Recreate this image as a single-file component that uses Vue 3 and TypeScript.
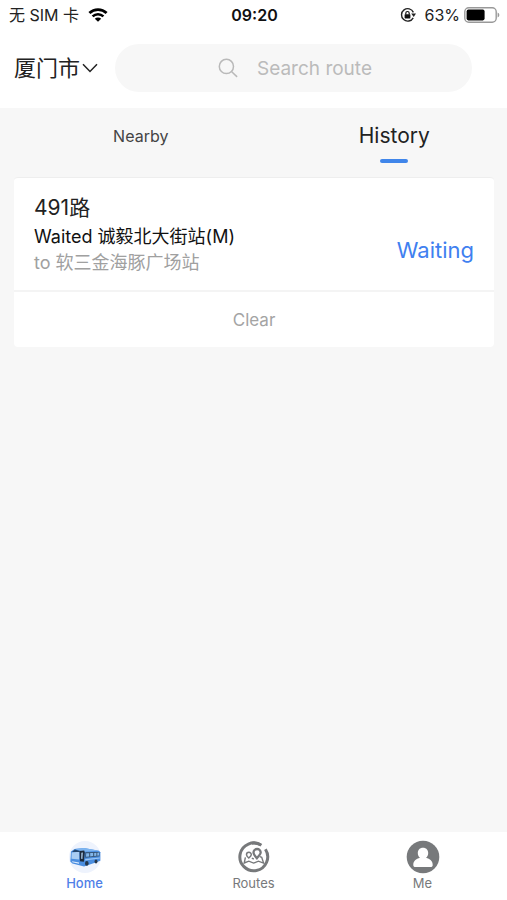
<script setup lang="ts">
import { ref } from 'vue'

interface HistoryItem {
  route: string
  stop: string
  destination: string
  status: string
}

const tabs = ['Nearby', 'History']
const activeTab = ref('History')
const keyword = ref('')
const history = ref<HistoryItem[]>([
  { route: '491路', stop: '诚毅北大街站(M)', destination: '软三金海豚广场站', status: 'Waiting' },
])
</script>

<template>
  <div class="screen">
    <div class="status">
      <div class="status-side">
        <span>无 SIM 卡</span>
        <svg class="wifi" viewBox="0 0 20 14" aria-hidden="true">
          <path d="M1.4 5.1a12.4 12.4 0 0 1 17.2 0" fill="none" stroke="#000" stroke-width="2.8" />
          <path d="M4.6 8.4a7.8 7.8 0 0 1 10.8 0" fill="none" stroke="#000" stroke-width="2.6" />
          <path d="M10 13.8 6.8 10.7a4.6 4.6 0 0 1 6.4 0z" />
        </svg>
      </div>
      <time class="clock">09:20</time>
      <div class="status-side status-right">
        <svg class="lock" viewBox="0 0 16 16" aria-hidden="true">
          <path d="M13.2 10.8A6.2 6.2 0 1 1 13.4 5.4" fill="none" stroke="#222" stroke-width="1.4" />
          <path d="M11.2 6.4h4.8l-2.3 3.5z" fill="#222" />
          <rect x="4.6" y="7.2" width="5.8" height="4.2" rx=".6" fill="#111" />
          <path d="M5.8 7.4V6.2a1.7 1.7 0 0 1 3.4 0v1.2" fill="none" stroke="#111" stroke-width="1.2" />
        </svg>
        <span>63%</span>
        <svg class="battery" viewBox="0 0 36 16" aria-hidden="true">
          <rect x=".8" y=".8" width="31.4" height="14.4" rx="4" fill="#fff" stroke="#999" stroke-width="1.4" />
          <rect x="2.6" y="2.6" width="18" height="10.8" rx="1.8" />
          <path d="M33.6 5.4a2.8 2.8 0 0 1 0 5.2z" fill="#999" />
        </svg>
      </div>
    </div>

    <header class="header">
      <button class="city" type="button">
        厦门市
        <svg class="chevron" viewBox="0 0 16 10" aria-hidden="true">
          <path d="m1 1.2 7 7.2 7-7.2" fill="none" stroke="#222" stroke-width="1.5" />
        </svg>
      </button>
      <label class="search">
        <svg class="magnifier" viewBox="0 0 20 20" aria-hidden="true">
          <circle cx="8.4" cy="8.4" r="7.1" />
          <path d="m13.5 13.5 5.6 5.4" />
        </svg>
        <input v-model="keyword" class="search-input" type="text" placeholder="Search route" aria-label="Search route" />
      </label>
    </header>

    <main class="content">
      <nav class="tabs">
        <button
          v-for="tab in tabs"
          :key="tab"
          type="button"
          class="tab"
          :class="{ active: tab === activeTab }"
          @click="activeTab = tab"
        >
          {{ tab }}
        </button>
      </nav>

      <section class="card">
        <article v-for="item in history" :key="item.route" class="entry">
          <div class="details">
            <h2 class="route">{{ item.route }}</h2>
            <p class="stop">Waited {{ item.stop }}</p>
            <p class="destination">to {{ item.destination }}</p>
          </div>
          <a class="waiting" href="#">{{ item.status }}</a>
        </article>
        <button class="clear" type="button" @click="history = []">Clear</button>
      </section>
    </main>

    <nav class="bottom">
      <a class="item selected" href="#">
        <svg class="icon" viewBox="0 0 34 34" aria-hidden="true">
          <circle cx="17" cy="17" r="16" fill="#eef3fd" />
          <g transform="translate(1 0)">
            <path d="M2 11.4 5.6 8.9l9.4-1L30 10.8l1.3 1.5v8.4l-3.2 1.4L15 26.4 3.4 23.6 1.3 21.4z" fill="#4a8ee0" />
            <path d="m5.6 8.9 9.4-1L30 10.8l-15.4.9z" fill="#7eb5f0" />
            <path d="m2.7 12.6 7.6-.8-.2 7.6-7.6-.6z" fill="#a9cdf3" />
            <path d="M3 12.1 5.8 9.6l5 1.4-.3 1.1z" fill="#24466d" />
            <path d="m10.6 10.9 4.6-.5.6 2-.9 9.4-4-.6z" fill="#1d2b3c" />
            <path d="m12.4 12.7 1.4-.1-.4 6.4-1.2-.2z" fill="#b9d7f5" />
            <path d="m16.4 12.3 14-.4v4.4l-14.2 1.5z" fill="#34516f" />
            <path d="m17.2 13.3 3-.1v3.2l-3.2.3zM21.2 13.1l3-.1v3.1l-3 .3zM25.2 12.9l2.2-.1v3l-2.2.2zM28.3 12.7l1.7-.1v2.9l-1.7.2z" fill="#83b7eb" />
            <path d="m16.2 19 14.6-1.5v1l-14.6 1.9z" fill="#9bc7f6" />
            <path d="M3 21.2 10 22.6v1.1L3.4 22.3z" fill="#dcecff" />
            <ellipse cx="17.8" cy="23.4" rx="1.8" ry="2.4" fill="#24364a" />
            <ellipse cx="27" cy="21.4" rx="1.5" ry="2" fill="#24364a" />
          </g>
        </svg>
        Home
      </a>
      <a class="item" href="#">
        <svg class="icon" viewBox="0 0 34 34" fill="none" stroke="#77797b" aria-hidden="true">
          <path d="M24.4 5.2a13.9 13.9 0 1 0 4 4" stroke-width="3" />
          <path d="M23.6 4.8A13.9 13.9 0 0 0 15 3.2" stroke-width="3" />
          <path d="M19.9 18.2c-2.7-3-3.4-4.2-3.4-5.6a3.6 3.6 0 0 1 7.2 0c0 1.4-1.1 2.6-3.8 5.6z" stroke-width="2.3" />
          <path d="M11.8 18c-1.7-1.5-2.3-2.3-2.3-3.3a2.4 2.4 0 0 1 4.8 0c0 1-.8 1.9-2.5 3.3z" stroke-width="1.5" />
          <path d="M8.4 17.4 7.2 23l4.6-1.8 4.8 1.9 4.8-1.9 5.2 1.9-1.9-5.8-1.8-.7M14.8 18.2l2 .8" stroke-width="1.4" />
        </svg>
        Routes
      </a>
      <a class="item" href="#">
        <svg class="icon" viewBox="0 0 34 34" aria-hidden="true">
          <circle cx="17" cy="17" r="16.3" fill="#77797b" />
          <path d="M17 7.7c3.2 0 5.2 2.2 5.2 5.3 0 2.2-.8 3.8-2.2 4.8 4 .8 6.7 3.4 6.7 7.2 0 1.4-.8 2.1-2.1 2.1H9.4c-1.3 0-2.1-.7-2.1-2.1 0-3.8 2.7-6.4 6.7-7.2-1.4-1-2.2-2.6-2.2-4.8 0-3.1 2-5.3 5.2-5.3z" fill="#fff" />
        </svg>
        Me
      </a>
    </nav>
  </div>
</template>

<style>
body {
  margin: 0;
}
</style>

<style scoped>
.screen {
  display: flex;
  flex-direction: column;
  min-height: 100vh;
  background: #f7f7f7;
  color: #222;
  font-family: Inter, "Noto Sans CJK SC", sans-serif;
}

button,
input {
  margin: 0;
  padding: 0;
  border: 0;
  background: none;
  color: inherit;
  font: inherit;
}

button {
  cursor: pointer;
}

a {
  text-decoration: none;
}

.status {
  display: flex;
  align-items: center;
  height: 30px;
  padding: 0 7px 0 9px;
  background: #fff;
  font-size: 16px;
  line-height: 30px;
}

.status-side {
  display: flex;
  flex: 1;
  align-items: center;
  gap: 9px;
}

.status-right {
  justify-content: flex-end;
  gap: 4px;
}

.clock {
  color: #111;
  font-weight: 600;
}

.wifi {
  width: 20px;
  height: 14px;
}

.lock {
  width: 16px;
  height: 16px;
  margin-right: 5px;
}

.battery {
  width: 36px;
  height: 16px;
}

.header {
  display: flex;
  align-items: center;
  gap: 17px;
  padding: 14px 35px 16px 14px;
  background: #fff;
}

.city {
  display: flex;
  align-items: center;
  gap: 2px;
  font-size: 22px;
  line-height: 32px;
}

.chevron {
  width: 16px;
  height: 10px;
}

.search {
  display: flex;
  flex: 1;
  align-items: center;
  justify-content: center;
  gap: 19px;
  height: 48px;
  padding-left: 4px;
  border-radius: 24px;
  background: #f7f7f7;
}

.magnifier {
  width: 20px;
  height: 20px;
  fill: none;
  stroke: #b9b9b9;
  stroke-width: 1.5;
}

.search-input {
  width: 116px;
  padding-top: 2px;
  outline: none;
  font-size: 19px;
  line-height: 28px;
}

.search-input::placeholder {
  color: #bbb;
  opacity: 1;
}

.content {
  flex: 1;
}

.tabs {
  display: grid;
  grid-template-columns: 1fr 1fr;
  height: 69px;
}

.tab {
  display: flex;
  flex-direction: column;
  align-items: center;
  padding: 12px 0 0 28px;
  color: #444;
  font-size: 16px;
  line-height: 32px;
}

.tab.active {
  color: #222;
  font-size: 21px;
}

.tab.active::after {
  width: 28px;
  height: 4px;
  margin-top: 7px;
  border-radius: 2px;
  background: #4086ea;
  content: "";
}

.card {
  margin: 0 13px 0 14px;
  border-top: 1px solid #eee;
  border-radius: 4px;
  background: #fff;
}

.entry {
  display: flex;
  align-items: flex-end;
  justify-content: space-between;
  padding: 14px 20px;
  border-bottom: 2px solid #f4f4f4;
}

.route,
.stop,
.destination {
  margin: 0;
  font-weight: 400;
}

.route {
  font-size: 21px;
  line-height: 32px;
}

.stop {
  color: #111;
  font-size: 18px;
  line-height: 26px;
}

.destination {
  color: #a0a0a0;
  font-size: 18px;
  line-height: 26px;
}

.waiting {
  padding-bottom: 10px;
  color: #4080f0;
  font-size: 22px;
  line-height: 32px;
}

.clear {
  display: block;
  width: 100%;
  height: 55px;
  color: #a4a4a4;
  font-size: 17px;
}

.bottom {
  display: grid;
  grid-template-columns: repeat(3, 1fr);
  background: #fff;
}

.item {
  display: flex;
  flex-direction: column;
  align-items: center;
  padding: 8px 0;
  color: #77797b;
  font-size: 13px;
  line-height: 18px;
}

.selected {
  color: #4f7fe8;
  font-weight: 500;
}

.icon {
  width: 34px;
  height: 34px;
}
</style>
